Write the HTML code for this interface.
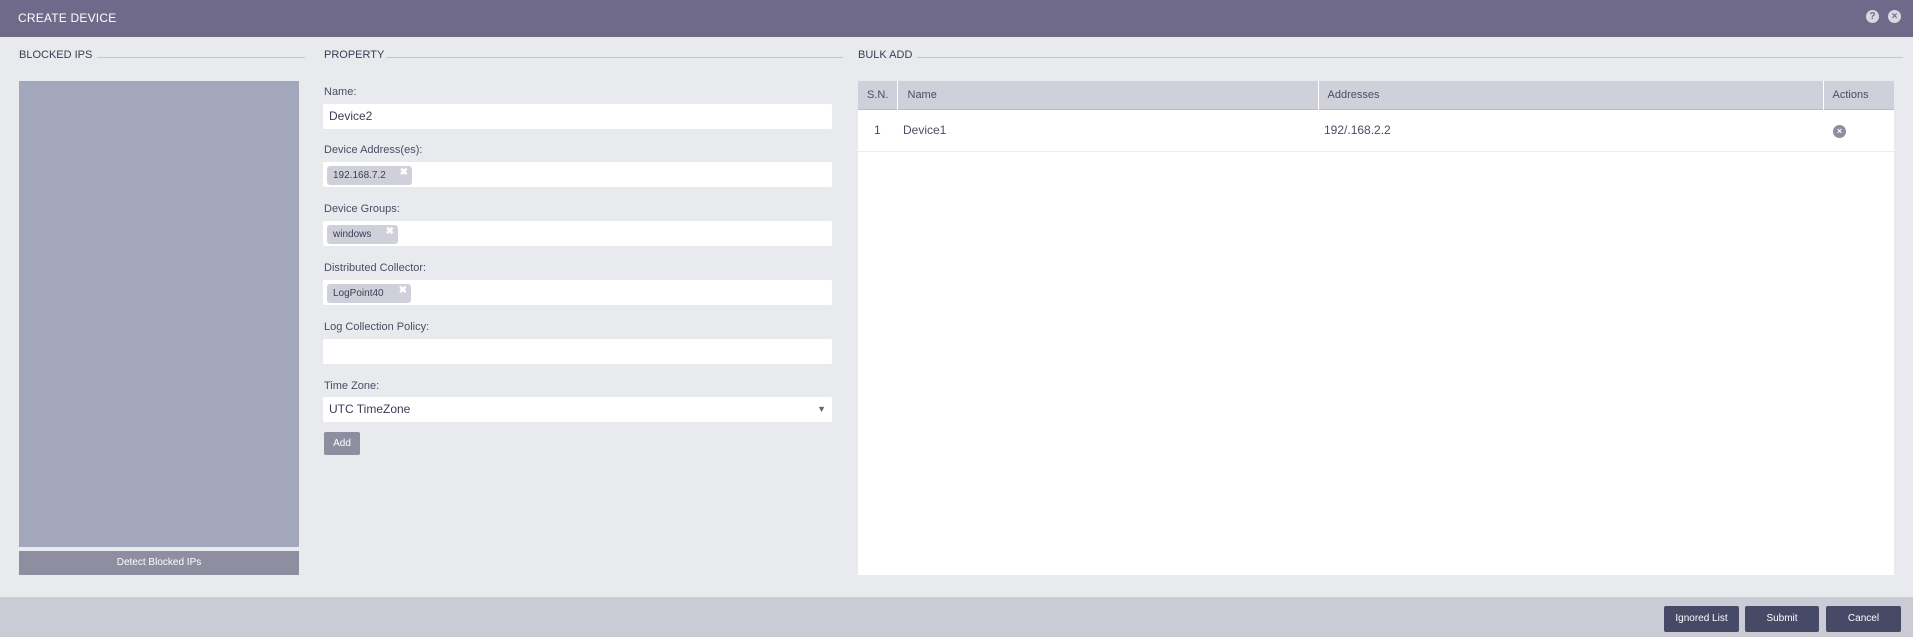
<!DOCTYPE html>
<html><head><meta charset="utf-8"><style>
*{box-sizing:border-box;margin:0;padding:0}
body{width:1913px;height:637px;background:#e9eaee;font-family:"Liberation Sans",sans-serif;color:#3a3d55;position:relative;overflow:hidden}
.abs{position:absolute}
.hdr{left:0;top:0;width:1913px;height:37px;background:#6f6a8a;color:#fff;font-size:12px;line-height:37px;padding-left:18px;letter-spacing:.2px}
.ico{width:13px;height:13px;border-radius:50%;background:#d8d8e2;color:#6f6a8a;font-size:10px;font-weight:bold;text-align:center;line-height:13px;top:10px}
.sec{font-size:11px;color:#3a3d55;top:49px}
.line{height:1px;background:#c3c5d0;top:57px}
.lbl{font-size:11px;color:#4a4d65;left:324px}
.inp{left:323px;width:509px;height:25px;background:#fff;border-radius:2px}
.tag{left:4px;top:4px;height:19px;background:#d0d0da;border-radius:3px;font-size:10px;line-height:19px;padding-left:6px;color:#3a3d55}
.tag i{position:absolute;right:4px;top:-3px;font-style:normal;color:#fff;font-size:10px;font-weight:bold}
.btn{background:#474a66;color:#fff;font-size:10px;text-align:center;line-height:26px;top:606px;height:26px;border-radius:2px}
th,td{font-weight:normal;text-align:left}
</style></head><body>
<div class="abs hdr">CREATE DEVICE</div>
<div class="abs ico" style="left:1866px">?</div>
<div class="abs ico" style="left:1888px">×</div>

<div class="abs sec" style="left:19px">BLOCKED IPS</div>
<div class="abs line" style="left:97px;width:208px"></div>
<div class="abs sec" style="left:324px">PROPERTY</div>
<div class="abs line" style="left:386px;width:457px"></div>
<div class="abs sec" style="left:858px">BULK ADD</div>
<div class="abs line" style="left:917px;width:986px"></div>

<div class="abs" style="left:19px;top:81px;width:280px;height:466px;background:#a2a7bb"></div>
<div class="abs" style="left:19px;top:551px;width:280px;height:24px;background:#8e8ea0;color:#fff;font-size:10px;text-align:center;line-height:24px">Detect Blocked IPs</div>

<div class="abs lbl" style="top:86px">Name:</div>
<div class="abs inp" style="top:104px;font-size:12px;line-height:25px;padding-left:6px">Device2</div>
<div class="abs lbl" style="top:144px">Device Address(es):</div>
<div class="abs inp" style="top:162px"><div class="abs tag" style="width:85px">192.168.7.2<i>✖</i></div></div>
<div class="abs lbl" style="top:203px">Device Groups:</div>
<div class="abs inp" style="top:221px"><div class="abs tag" style="width:71px">windows<i>✖</i></div></div>
<div class="abs lbl" style="top:262px">Distributed Collector:</div>
<div class="abs inp" style="top:280px"><div class="abs tag" style="width:84px">LogPoint40<i>✖</i></div></div>
<div class="abs lbl" style="top:321px">Log Collection Policy:</div>
<div class="abs inp" style="top:339px"></div>
<div class="abs lbl" style="top:380px">Time Zone:</div>
<div class="abs inp" style="top:397px;font-size:12px;line-height:25px;padding-left:6px">UTC TimeZone<span class="abs" style="right:6px;top:0;font-size:9px;color:#666">▼</span></div>
<div class="abs" style="left:324px;top:432px;width:36px;height:23px;background:#8e8ea0;color:#fff;font-size:10px;text-align:center;line-height:23px;border-radius:2px">Add</div>

<div class="abs" style="left:858px;top:81px;width:1036px;height:494px;background:#fff">
<table style="width:100%;border-collapse:collapse;font-size:11px;color:#4a4d65">
<tr style="background:#d0d0da;height:28px;border-bottom:1px solid #b9bac8">
<th style="width:39px;padding-left:9px;border-right:1px solid #fff">S.N.</th>
<th style="width:421px;padding-left:10px;border-right:1px solid #fff">Name</th>
<th style="width:505px;padding-left:9px;border-right:1px solid #fff">Addresses</th>
<th style="padding-left:9px">Actions</th></tr>
<tr style="height:42px;border-bottom:1px solid #eee;font-size:12px">
<td style="padding-left:16px">1</td><td style="padding-left:6px">Device1</td><td style="padding-left:6px">192/.168.2.2</td>
<td style="padding-left:10px"><span style="display:inline-block;width:13px;height:13px;border-radius:50%;background:#8e8ea0;color:#fff;font-size:9px;text-align:center;line-height:13px;font-weight:bold">×</span></td></tr>
</table></div>

<div class="abs" style="left:0;top:597px;width:1913px;height:40px;background:#cbcbd5"></div>
<div class="abs btn" style="left:1664px;width:75px">Ignored List</div>
<div class="abs btn" style="left:1745px;width:74px">Submit</div>
<div class="abs btn" style="left:1826px;width:75px">Cancel</div>
</body></html>
